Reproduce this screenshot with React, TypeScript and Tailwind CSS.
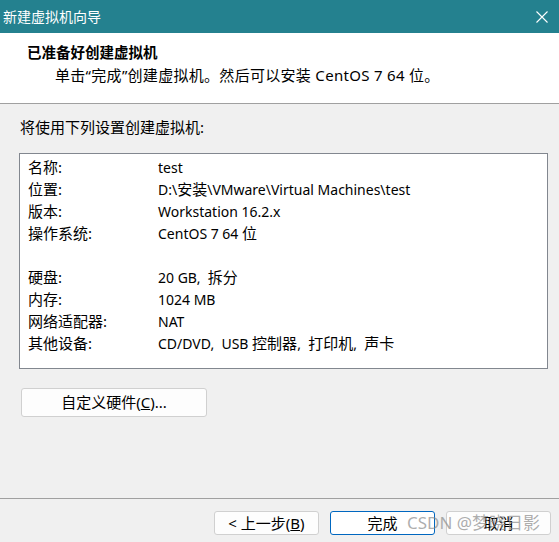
import React from 'react';

const rows: [string, string][] = [
    ['名称:', 'test'],
    ['位置:', 'D:\\安装\\VMware\\Virtual Machines\\test'],
    ['版本:', 'Workstation 16.2.x'],
    ['操作系统:', 'CentOS 7 64 位'],
    ['', ''],
    ['硬盘:', '20 GB, 拆分'],
    ['内存:', '1024 MB'],
    ['网络适配器:', 'NAT'],
    ['其他设备:', 'CD/DVD, USB 控制器, 打印机, 声卡'],
];

// CJK runs look a bit larger than the latin text in the original dialog
function MixedText({ text }: { text: string }) {
    const parts = text.split(/([\u4e00-\u9fff]+)/);
    return (
        <>
            {parts.map((p, i) =>
                /[\u4e00-\u9fff]/.test(p) ? (
                    <span key={i} className="text-[15px]">
                        {p}
                    </span>
                ) : (
                    <span key={i} className="text-[14px] whitespace-pre">
                        {p.replace(/, /g, ',  ')}
                    </span>
                )
            )}
        </>
    );
}

function WizardButton({
    children,
    primary,
}: {
    children: React.ReactNode;
    primary?: boolean;
}) {
    return (
        <button
            className={
                primary
                    ? 'w-[105px] h-[24px] rounded-[3px] border border-[#0067c0] bg-white text-black text-[15px] flex items-center justify-center whitespace-pre'
                    : 'w-[105px] h-[24px] rounded-[3px] border border-[#d0d0d0] bg-[#fdfdfd] text-black text-[15px] flex items-center justify-center whitespace-pre'
            }
        >
            {children}
        </button>
    );
}

function App() {
    return (
        <div
            className="w-[559px] h-[542px] flex flex-col bg-[#f0f0f0] text-black overflow-hidden"
            style={{ fontFamily: '"Noto Sans", "Noto Sans CJK SC", sans-serif' }}
        >
            <div className="h-[33px] shrink-0 bg-[#24818f] flex items-center justify-between pl-[3px] pr-[11px]">
                <span className="text-white text-[14px] leading-none">新建虚拟机向导</span>
                <svg width="12" height="12" viewBox="0 0 12 12" className="text-white">
                    <path d="M0.5 0.5 L11.5 11.5 M11.5 0.5 L0.5 11.5" stroke="currentColor" strokeWidth="1.1" />
                </svg>
            </div>

            <div className="h-[71px] shrink-0 bg-white border-b border-[#a0a0a0] pl-[27px] pt-[8px]">
                <div className="text-[14.5px] font-bold leading-[22px]">已准备好创建虚拟机</div>
                <div className="text-[15px] leading-[22px] pl-[28px] mt-[1px] tracking-[0.3px]">
                    单击“完成”创建虚拟机。然后可以安装 CentOS 7 64 位。
                </div>
            </div>

            <div className="h-[394px] shrink-0 flex flex-col pl-[19px] pr-[11px]">
                <div className="text-[15px] leading-[22px] mt-[12px] pl-[1px]">将使用下列设置创建虚拟机:</div>

                <div className="mt-[15px] h-[216px] bg-white border border-[#82878f] pt-[2px] pl-[8px]">
                    {rows.map(([label, value], i) => (
                        <div key={i} className="flex h-[22px] items-center">
                            <span className="w-[130px] text-[15px]">{label}</span>
                            <span>
                                <MixedText text={value} />
                            </span>
                        </div>
                    ))}
                </div>

                <button className="mt-[19px] ml-[2px] w-[186px] h-[29px] rounded-[3px] border border-[#d0d0d0] bg-[#fdfdfd] text-[15px] flex items-center justify-center">
                    自定义硬件(<span className="underline">C</span>)...
                </button>
            </div>

            <div className="relative flex-1 border-t border-[#a0a0a0] flex justify-end gap-[11px] pt-[12px] pr-[8px]">
                <WizardButton>
                    {'< 上一步('}<span className="underline">B</span>)
                </WizardButton>
                <WizardButton primary>完成</WizardButton>
                <WizardButton>取消</WizardButton>
                <span className="absolute left-[407px] top-[12px] text-[17px] leading-[24px] text-[#8a8a8a]/70 whitespace-nowrap pointer-events-none">
                    CSDN @梦晓日影
                </span>
            </div>
        </div>
    );
}

export default App;
